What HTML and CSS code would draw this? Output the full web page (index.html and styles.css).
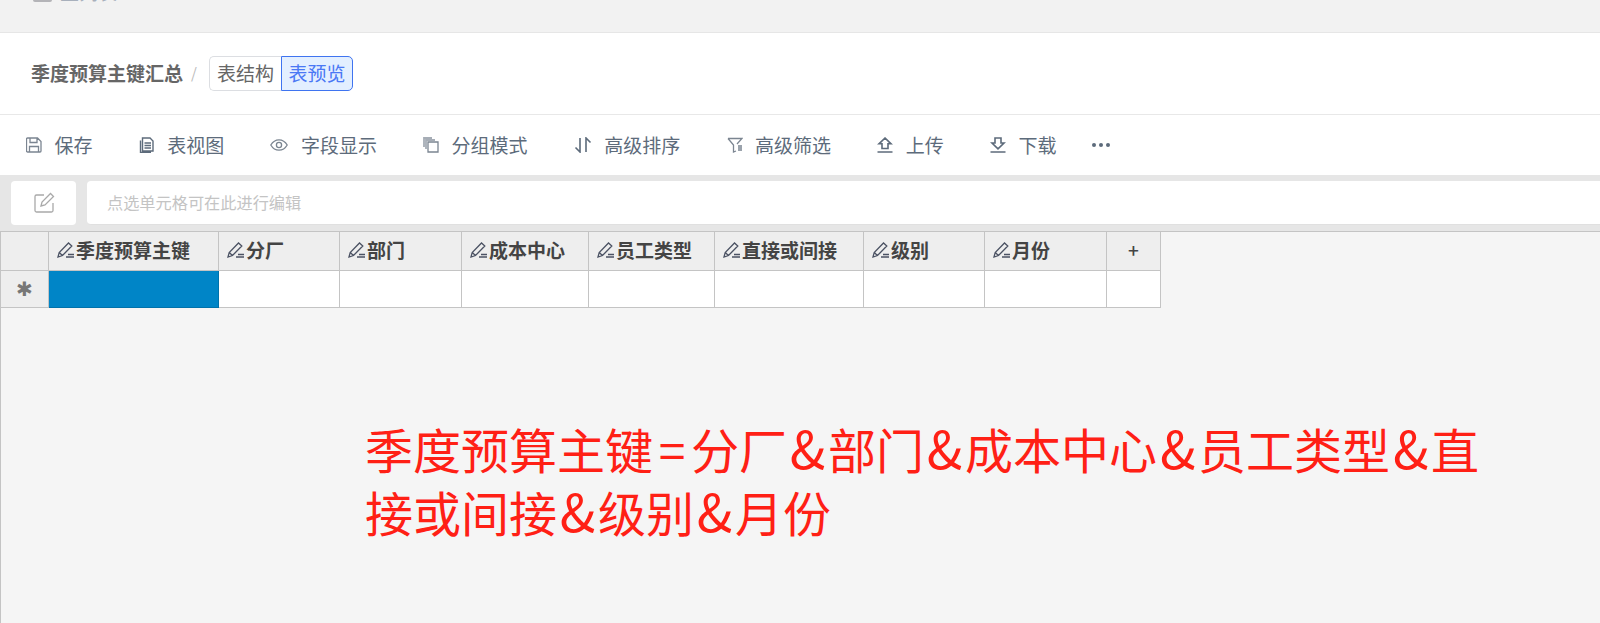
FILE: index.html
```html
<!DOCTYPE html>
<html lang="zh-CN">
<head>
  <meta charset="UTF-8" />
  <title>季度预算主键汇总</title>
  <link rel="stylesheet" href="styles.css">
</head>
<body>
  <div class="top-band">
    <div class="top-crumb">
      <span class="top-icon"></span>
      <span>主列表</span>
    </div>
  </div>

  <div class="title-bar">
    <span class="title-name">季度预算主键汇总</span>
    <span class="title-sep">/</span>
    <div class="tab-group">
      <span class="tab">表结构</span>
      <span class="tab active">表预览</span>
    </div>
  </div>

  <div class="toolbar">
    <div class="tool">
      <svg class="tool-icon" viewBox="0 0 16 16"><path d="M1.500 1h10l3.500 3.500v9.500a1 1 0 0 1-1 1H1.500a1 1 0 0 1-1-1V2a1 1 0 0 1 1-1zM4 1v4.500h7V1M3.500 15V9.500h9V15"/></svg>
      <span>保存</span>
    </div>
    <div class="tool">
      <svg class="tool-icon dark" viewBox="0 0 16 16"><path d="M3.500 1h7.500l3 3v10h-10.500zM5.500 6h6.500M5.500 8.500h6.500M5.500 11h6.500M1.500 3.500V15.500h10.500" /></svg>
      <span>表视图</span>
    </div>
    <div class="tool">
      <svg class="tool-icon wide" viewBox="0 0 18 16"><path d="M.8 8C2.800 4.600 5.600 2.800 9 2.800s6.200 1.800 8.200 5.200c-2 3.400-4.800 5.200-8.200 5.200S2.800 11.400.8 8z"/><circle cx="9" cy="8" r="2.600"/></svg>
      <span>字段显示</span>
    </div>
    <div class="tool">
      <svg class="tool-icon" viewBox="0 0 16 16"><path class="soft" d="M1 10V1h8M3 12V3h9"/><path d="M5 5h10v10H5z"/></svg>
      <span>分组模式</span>
    </div>
    <div class="tool">
      <svg class="tool-icon wide thick" viewBox="0 0 18 16"><path d="M6 1v14L1.500 10.500M12 15V1l4.500 4.500"/></svg>
      <span>高级排序</span>
    </div>
    <div class="tool">
      <svg class="tool-icon" viewBox="0 0 16 16"><path d="M1 1.500h14l-5 5.500M1 1.500l5.500 6.500v7l2.500-1M11 9h4M11 11h4M11 13h4"/></svg>
      <span>高级筛选</span>
    </div>
    <div class="tool">
      <svg class="tool-icon thick" viewBox="0 0 16 16"><path d="M8 1L2 6.800h3v4.700h6V6.800h3zM.5 15h15"/></svg>
      <span>上传</span>
    </div>
    <div class="tool">
      <svg class="tool-icon thick" viewBox="0 0 16 16"><path d="M5 1h6v5h3l-6 5.800L2 6h3zM.5 15h15"/></svg>
      <span>下载</span>
    </div>
    <div class="tool-more"><i></i><i></i><i></i></div>
  </div>

  <div class="edit-row">
    <div class="edit-btn">
      <svg class="edit-icon" viewBox="0 0 22 22"><path d="M11 3H3.500A1.500 1.500 0 0 0 2 4.500v14A1.500 1.500 0 0 0 3.500 20h15a1.500 1.500 0 0 0 1.500-1.500V11"/><path d="M8 14l1-4 8.500-8.500 3 3L12 13z"/></svg>
    </div>
    <div class="edit-input">点选单元格可在此进行编辑</div>
  </div>

  <div class="sheet">
    <div class="grid">
      <div class="cell head"></div>
      <div class="cell head col"><svg class="pen" viewBox="0 0 18 16"><use href="#pen"/></svg>季度预算主键</div>
      <div class="cell head col"><svg class="pen" viewBox="0 0 18 16"><use href="#pen"/></svg>分厂</div>
      <div class="cell head col"><svg class="pen" viewBox="0 0 18 16"><use href="#pen"/></svg>部门</div>
      <div class="cell head col"><svg class="pen" viewBox="0 0 18 16"><use href="#pen"/></svg>成本中心</div>
      <div class="cell head col"><svg class="pen" viewBox="0 0 18 16"><use href="#pen"/></svg>员工类型</div>
      <div class="cell head col"><svg class="pen" viewBox="0 0 18 16"><use href="#pen"/></svg>直接或间接</div>
      <div class="cell head col"><svg class="pen" viewBox="0 0 18 16"><use href="#pen"/></svg>级别</div>
      <div class="cell head col"><svg class="pen" viewBox="0 0 18 16"><use href="#pen"/></svg>月份</div>
      <div class="cell head add">+</div>

      <div class="cell head star">✱</div>
      <div class="cell selected"></div>
      <div class="cell"></div>
      <div class="cell"></div>
      <div class="cell"></div>
      <div class="cell"></div>
      <div class="cell"></div>
      <div class="cell"></div>
      <div class="cell"></div>
      <div class="cell"></div>
    </div>
    <div class="note">季度预算主键<span class="eq">=</span>分厂<span class="amp">&amp;</span>部门<span class="amp">&amp;</span>成本中心<span class="amp">&amp;</span>员工类型<span class="amp">&amp;</span>直<br>接或间接<span class="amp">&amp;</span>级别<span class="amp">&amp;</span>月份</div>
  </div>

  <svg class="defs" width="0" height="0">
    <symbol id="pen" viewBox="0 0 18 16">
      <path d="M1 15l1.200-4.500L11.500 1l3.300 3-9.300 9.500zM2.200 10.500l3.300 3M9 15h8M11 12.500h6"/>
    </symbol>
  </svg>
</body>
</html>
```
FILE: styles.css
```css
body {
  margin: 0;
  height: 623px;
  overflow: hidden;
  display: flex;
  flex-direction: column;
  background: #f5f5f5;
  font-family: "Noto Sans CJK SC", "Liberation Sans", sans-serif;
}

/* 顶部被截断的一条 */
.top-band {
  height: 32px;
  background: #f2f2f2;
  border-bottom: 1px solid #e6e6e6;
  overflow: hidden;
}
.top-crumb {
  display: flex;
  align-items: center;
  gap: 8px;
  height: 24px;
  margin-top: -20px;
  padding-left: 33px;
  font-size: 19px;
  line-height: 24px;
  color: #a8b0bc;
}
.top-icon {
  width: 19px;
  height: 20px;
  border-radius: 2px;
  background: #b4b4b8;
}

/* 标题行 */
.title-bar {
  height: 81px;
  display: flex;
  align-items: center;
  padding-left: 31px;
  background: #fff;
  border-bottom: 1px solid #e8e8e8;
}
.title-name {
  margin-top: -2px;
  font-size: 19px;
  font-weight: 700;
  color: #666;
}
.title-sep {
  margin: -2px 12px 0 8px;
  font-size: 15px;
  color: #bbb;
}
.tab-group {
  display: flex;
}
.tab {
  box-sizing: border-box;
  width: 72px;
  height: 35px;
  line-height: 31px;
  text-align: center;
  font-size: 19px;
  color: #666;
  background: #fff;
  border: 1px solid #dcdee2;
  border-right: none;
  border-radius: 5px 0 0 5px;
}
.tab.active {
  color: #4a78f5;
  background: #e3efff;
  border: 1px solid #3f74f0;
  border-radius: 0 5px 5px 0;
}

/* 工具栏 */
.toolbar {
  height: 60px;
  display: flex;
  align-items: center;
  gap: 46.200px;
  padding-left: 26px;
  background: #fff;
  font-size: 19px;
  color: #5d6b7b;
}
.tool {
  display: flex;
  align-items: center;
  gap: 12.500px;
}
.tool span {
  margin-top: -2px;
}
.tool-icon {
  width: 16px;
  height: 16px;
  fill: none;
  stroke: #7b8591;
  stroke-width: 1.300;
}
.tool-icon.wide {
  width: 18px;
}
.tool-icon.dark {
  stroke: #5d6b7b;
  stroke-width: 1.400;
}
.tool-icon.thick {
  stroke: #5d6b7b;
  stroke-width: 1.600;
}
.tool-icon .soft {
  stroke: #a6adb6;
  stroke-width: 1.800;
}
.tool-more {
  display: flex;
  gap: 3px;
  margin-left: -11px;
}
.tool-more i {
  width: 4px;
  height: 4px;
  border-radius: 50%;
  background: #5d6b7b;
}

/* 编辑行 */
.edit-row {
  height: 56px;
  display: flex;
  gap: 11px;
  padding: 6px 0 0 11px;
  box-sizing: border-box;
  background: #e6e6e6;
}
.edit-btn {
  width: 65px;
  height: 44px;
  display: flex;
  align-items: center;
  justify-content: center;
  background: #fff;
  border-radius: 4px;
}
.edit-icon {
  width: 22px;
  height: 22px;
  fill: none;
  stroke: #a9a9a9;
  stroke-width: 1.300;
}
.edit-input {
  flex: 1;
  height: 43px;
  line-height: 42px;
  padding-left: 20px;
  font-size: 16.200px;
  color: #c4c4c4;
  background: #fff;
  border-radius: 4px 0 0 4px;
  border-bottom: 1px solid #e0e0e0;
}

/* 表格区 */
.sheet {
  flex: 1;
  position: relative;
  border-top: 1px solid #c4c4c4;
  border-left: 1px solid #c4c4c4;
}
.grid {
  display: grid;
  grid-template-columns: 48px 170px 121px 122px 127px 126px 149px 121px 122px 54px;
  grid-template-rows: 39px 37px;
  width: max-content;
}
.cell {
  box-sizing: border-box;
  background: #fff;
  border-right: 1px solid #c4c4c4;
  border-bottom: 1px solid #c4c4c4;
}
.cell.head {
  background: #eee;
}
.col {
  display: flex;
  align-items: center;
  gap: 1px;
  padding: 0 0 3px 8px;
  font-size: 19px;
  font-weight: 700;
  color: #444;
}
.pen {
  width: 18px;
  height: 16px;
  fill: none;
  stroke: #4b5263;
  stroke-width: 1.300;
}
.add {
  text-align: center;
  line-height: 36px;
  font-size: 19px;
  font-weight: 500;
  color: #444;
}
.star {
  text-align: center;
  line-height: 34px;
  font-size: 20px;
  color: #777;
}
.cell.selected {
  background: #0085c7;
  border-right-color: #0072ab;
  border-bottom-color: #0072ab;
}
.defs {
  position: absolute;
}

/* 红色批注，压在表格区上面 */
.note {
  position: absolute;
  left: 364px;
  top: 185px;
  white-space: nowrap;
  font-size: 48px;
  line-height: 63px;
  color: #ff2015;
}
.eq,
.amp {
  display: inline-block;
  line-height: 0;
  text-align: center;
}
.eq {
  width: 38px;
}
.amp {
  width: 41px;
  font-size: 52px;
  font-weight: 400;
}
```
